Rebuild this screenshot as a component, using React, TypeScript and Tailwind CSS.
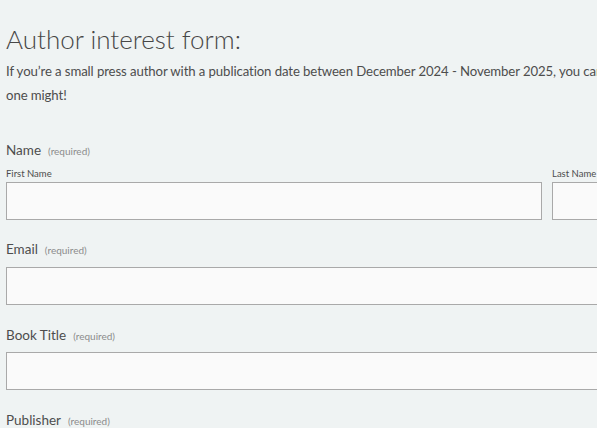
export default function App() {
    const fields = ['Email', 'Book Title', 'Publisher'];

    return (
        <div className="min-h-screen w-full overflow-hidden bg-[#eff3f3] font-['Lato',sans-serif] text-[#4d4d4d]">
            <div className="w-[1094px] px-[6px] pt-[23px]">
                <h2 className="text-[26px] font-light leading-[32px] text-[#474747]">Author interest form:</h2>
                <p className="mt-[4px] text-[13.2px] leading-[24px] tracking-[-0.1px]">
                    <span className="whitespace-nowrap">If you’re a small press author with a publication date between December 2024 - November 2025, you can fill out this form to let us know about your book. We can’t promise to feature every title, but this</span>
                    <br />
                    one might!
                </p>

                <div className="mt-[33px]">
                    <div className="flex items-baseline gap-[7px]">
                        <span className="text-[13.5px]">Name</span>
                        <span className="text-[10px] text-[#8c8c8c]">(required)</span>
                    </div>
                    <div className="mt-[7px] flex gap-[10px]">
                        <div className="flex-1">
                            <label className="block text-[9.5px] leading-[14px]">First Name</label>
                            <input className="mt-[1px] block h-[38px] w-full border border-[#a9a9a9] bg-[#fafafa]" />
                        </div>
                        <div className="flex-1">
                            <label className="block text-[9.5px] leading-[14px]">Last Name</label>
                            <input className="mt-[1px] block h-[38px] w-full border border-[#a9a9a9] bg-[#fafafa]" />
                        </div>
                    </div>
                </div>

                {fields.map((label, i) => (
                    <div key={label} className={i === 0 ? 'mt-[19px]' : 'mt-[20px]'}>
                        <div className="flex items-baseline gap-[7px]">
                            <span className="text-[13.5px]">{label}</span>
                            <span className="text-[10px] text-[#8c8c8c]">(required)</span>
                        </div>
                        <input className="mt-[7px] block h-[38px] w-full border border-[#a9a9a9] bg-[#fafafa]" />
                    </div>
                ))}
            </div>
        </div>
    );
}
